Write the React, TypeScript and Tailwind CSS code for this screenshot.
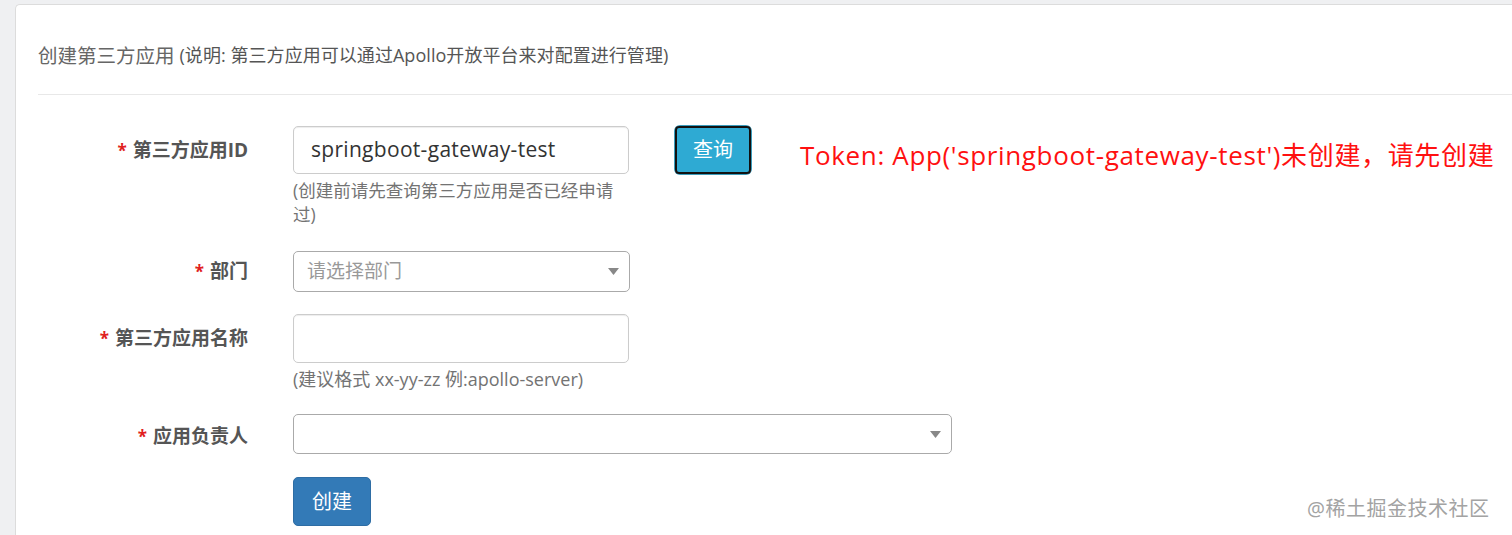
import React from "react";

const cjk = "font-['Open_Sans','Noto_Sans_CJK_SC',sans-serif]";

const Caret = () => (
  <svg width="11" height="7" viewBox="0 0 11 7" className="shrink-0">
    <path d="M0 0h11L5.5 7z" fill="#888" />
  </svg>
);

const Label = ({ text, h }: { text: string; h: string }) => (
  <div className={`w-[210px] ${h} flex items-center justify-end shrink-0 pt-[1px]`}>
    <span className="text-[#e02020] text-[17px] font-bold mr-[6px]">*</span>
    <span className="text-[#555] text-[19px] font-bold">{text}</span>
  </div>
);

const App = () => {
  return (
    <div className={`w-[1512px] h-[535px] overflow-hidden bg-[#eff0f2] pl-[15px] pt-[4px] ${cjk}`}>
      {/* Card */}
      <div className="relative h-[560px] bg-white border-t border-l border-[#dcdcdc] rounded-tl-[5px]">
        {/* Header */}
        <div className="ml-[22px] h-[90px] border-b border-[#e8e8e8] flex items-center pt-[12px]">
          <span className="text-[#666] text-[19.5px]">创建第三方应用</span>
          <span className="text-[#555] text-[18px] ml-[5px] tracking-[0.05px]">
            (说明: 第三方应用可以通过Apollo开放平台来对配置进行管理)
          </span>
        </div>

        {/* Form */}
        <div className="pl-[22px] pt-[31px]">
          {/* App ID */}
          <div className="flex mb-[25px]">
            <Label text="第三方应用ID" h="h-[48px]" />
            <div className="ml-[45px] w-[336px] shrink-0">
              <div className="h-[48px] border border-[#ccc] rounded-[5px] flex items-center px-[17px] shadow-[inset_0_1px_1px_rgba(0,0,0,0.075)]">
                <span className="text-[#333] text-[21px] tracking-[0.3px]">springboot-gateway-test</span>
              </div>
              <p className="mt-[4px] w-[334px] text-[#737373] text-[17.5px] leading-[24px]">
                (创建前请先查询第三方应用是否已经申请过)
              </p>
            </div>
            <div className="ml-[46px] h-[48px] w-[76px] shrink-0 rounded-[5px] ring-1 ring-[#3b9cbc] flex">
              <button className="w-full h-full rounded-[4px] border-2 border-[#111] bg-[#2eaad3] text-white text-[20px]">
                查询
              </button>
            </div>
            <div className="ml-[49px] h-[58px] flex items-center">
              <span className="text-[#ff1010] text-[26px] whitespace-nowrap tracking-[0.65px]">
                Token: App('springboot-gateway-test')未创建，请先创建
              </span>
            </div>
          </div>

          {/* Department */}
          <div className="flex mb-[22px]">
            <Label text="部门" h="h-[40px]" />
            <div className="ml-[45px] w-[337px] h-[41px] border border-[#aaa] rounded-[5px] flex items-center justify-between pl-[13px] pr-[10px]">
              <span className="text-[#999] text-[19px]">请选择部门</span>
              <Caret />
            </div>
          </div>

          {/* App name */}
          <div className="flex mb-[23px]">
            <Label text="第三方应用名称" h="h-[48px]" />
            <div className="ml-[45px] w-[336px] shrink-0">
              <div className="h-[49px] border border-[#ccc] rounded-[5px] shadow-[inset_0_1px_1px_rgba(0,0,0,0.075)]" />
              <p className="mt-[4px] text-[#737373] text-[18px] leading-[24px]">
                (建议格式 xx-yy-zz 例:apollo-server)
              </p>
            </div>
          </div>

          {/* Owner */}
          <div className="flex mb-[19px]">
            <Label text="应用负责人" h="h-[44px]" />
            <div className="ml-[45px] w-[659px] h-[40px] border border-[#aaa] rounded-[5px] flex items-center justify-end pr-[10px]">
              <Caret />
            </div>
          </div>

          {/* Submit */}
          <div className="flex">
            <div className="w-[210px] shrink-0" />
            <button className="ml-[45px] w-[78px] h-[49px] rounded-[5px] border border-[#2e6da4] bg-[#337ab7] text-white text-[20px]">
              创建
            </button>
          </div>
        </div>

        {/* Watermark */}
        <div className="absolute left-[1291px] top-[489px] text-[#a3a3a3] text-[20px] tracking-[0.5px]">
          @稀土掘金技术社区
        </div>
      </div>
    </div>
  );
};

export default App;
